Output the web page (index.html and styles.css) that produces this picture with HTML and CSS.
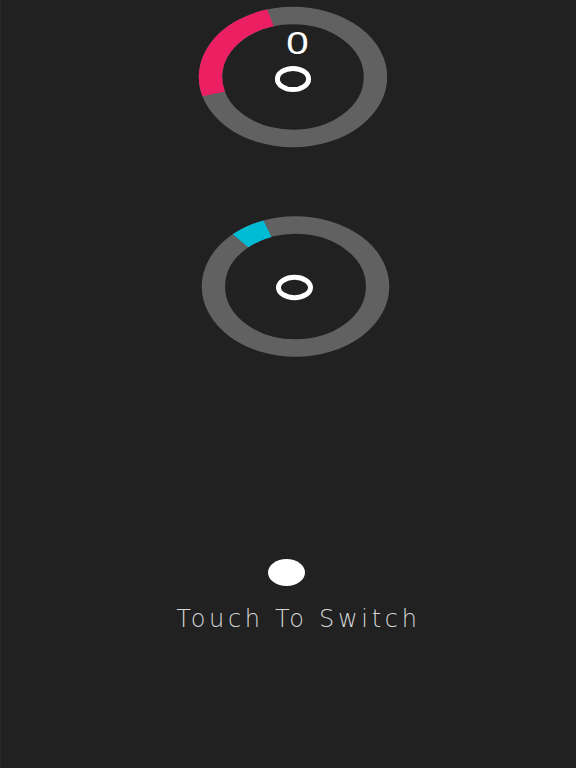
FILE: index.html
```html
<!DOCTYPE html>
<html>
<head>
<meta charset="utf-8">
<link rel="stylesheet" href="styles.css">
</head>
<body>
<main class="screen">
  <svg class="scene" width="576" height="607" viewBox="0 0 576 607" xmlns="http://www.w3.org/2000/svg">
    <!-- top ring -->
    <g transform="translate(293 77) scale(1.341 1)">
      <circle class="track" r="61.5"/>
      <circle class="arc-pink" r="61.5" transform="rotate(164)" stroke-dasharray="96.6 400"/>
    </g>
    <text class="score" x="0" y="0" transform="translate(297.5 54) scale(1.3 1)">0</text>
    <ellipse class="pickup" cx="293" cy="79" rx="15.6" ry="10.6"/>

    <!-- second ring -->
    <g transform="translate(295.5 286.5) scale(1.335 1)">
      <circle class="track" r="61.5"/>
      <circle class="arc-blue" r="61.5" transform="rotate(228)" stroke-dasharray="23.6 400"/>
    </g>
    <ellipse class="pickup" cx="294.5" cy="287.5" rx="16" ry="10.2"/>

    <!-- ball -->
    <ellipse class="ball" cx="286.5" cy="572.5" rx="18.5" ry="13.5"/>
  </svg>
  <p class="hint">Touch To Switch</p>
</main>
</body>
</html>
```
FILE: styles.css
```css
html, body {
  margin: 0;
  padding: 0;
  background: #212121;
}
.screen {
  width: 576px;
  height: 768px;
  box-sizing: border-box;
  border-left: 1px solid #2a2a2a;
  background: #212121;
  display: flex;
  flex-direction: column;
  overflow: hidden;
}
.scene {
  display: block;
  margin-left: -1px;
  flex: none;
}
.track {
  fill: none;
  stroke: #616161;
  stroke-width: 17.5;
}
.arc-pink {
  fill: none;
  stroke: #ec1f63;
  stroke-width: 17.5;
}
.arc-blue {
  fill: none;
  stroke: #00bbd4;
  stroke-width: 17.5;
}
.pickup {
  fill: none;
  stroke: #ffffff;
  stroke-width: 5;
}
.ball {
  fill: #ffffff;
}
.score {
  fill: #ffffff;
  font-family: "Liberation Sans", Arial, sans-serif;
  font-size: 31px;
  text-anchor: middle;
}
.hint {
  margin: 0;
  margin-left: 20px;
  text-align: center;
  font-family: "DejaVu Sans", sans-serif;
  font-weight: 200;
  font-size: 24px;
  line-height: 24px;
  letter-spacing: 3.7px;
  color: #d6d6d6;
}
```
